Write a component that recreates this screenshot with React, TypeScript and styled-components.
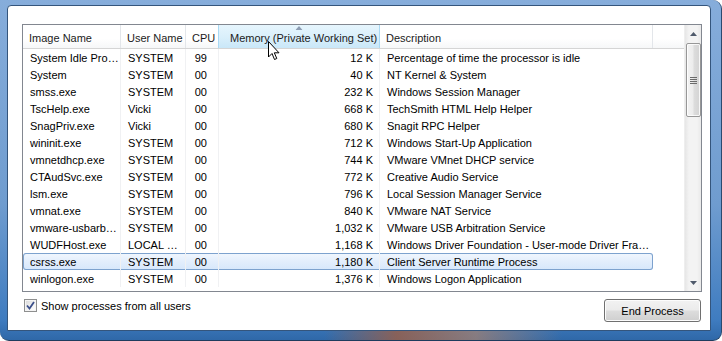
import React from "react";
import styled, { createGlobalStyle } from "styled-components";

const Global = createGlobalStyle`
  html, body { margin: 0; padding: 0; background: #fff; }
  body { font-family: "Liberation Sans", Arial, sans-serif; }
  * { box-sizing: border-box; }
`;

const COLS = [98, 65, 33, 161, 273];

const Window = styled.div`
  position: relative;
  width: 722px;
  height: 341px;
  display: flex;
  flex-direction: column;
  padding: 5px 10px 9px 7px;
  border-radius: 0 9px 9px 9px;
  border-right: 1px solid #2a4a70;
  border-bottom: 1px solid #1f3c5e;
  background:
    linear-gradient(to right, rgba(0,0,0,0) 0%, rgba(0,0,0,0) 45%, rgba(150,95,75,0.85) 55%, rgba(170,130,110,0.7) 66%, rgba(0,0,0,0) 78%) bottom / 100% 9px no-repeat,
    linear-gradient(to bottom, #86addb 0%, #6f9ccf 60%, #3f7cc0 94%, #2f68a8 100%);
  overflow: hidden;
`;

const Panel = styled.div`
  flex: 1;
  display: flex;
  flex-direction: column;
  background: #fff;
  border: 1px solid #34557c;
  border-radius: 4px 4px 0 0;
  padding: 18px 9px 0 14px;
`;

const ListBox = styled.div`
  width: 680px;
  height: 268px;
  border: 1px solid #828790;
  display: flex;
  background: #fff;
  overflow: hidden;
`;

const ListMain = styled.div`
  width: 661px;
  display: flex;
  flex-direction: column;
`;

const Header = styled.div`
  height: 24px;
  display: flex;
  border-bottom: 1px solid #d5d5d5;
  background: linear-gradient(to bottom, #ffffff 0%, #ffffff 60%, #f6f7f8 100%);
`;

const HeadCell = styled.div<{ $w: number; $sorted?: boolean }>`
  position: relative;
  width: ${(p) => p.$w}px;
  flex: none;
  padding-left: ${(p) => (p.$sorted ? 11 : 6)}px;
  padding-top: 2px;
  display: flex;
  align-items: center;
  font-size: 11px;
  color: #1b1b1b;
  white-space: nowrap;
  overflow: hidden;
  border-right: 1px solid #e3e6ea;
  ${(p) =>
    p.$sorted
      ? `background: linear-gradient(to bottom, #e6f5fd 0%, #d9effb 55%, #c9e7f8 100%);
         border-left: 1px solid #a9d9f4; border-right: 1px solid #a9d9f4; margin-left: -1px;`
      : ""}
`;

const SortArrow = styled.svg`
  position: absolute;
  top: 1px;
  left: 50%;
  transform: translateX(-50%);
`;

const Filler = styled.div`
  flex: 1;
`;

const Row = styled.div<{ $selected?: boolean }>`
  height: 17px;
  display: flex;
  position: relative;
  ${(p) =>
    p.$selected
      ? `background: linear-gradient(to bottom, #f1f7fe 0%, #e3eefc 50%, #d6e7fb 100%);
         box-shadow: inset 0 0 0 1px #7da2ce; border-radius: 3px; width: 630px;`
      : ""}
`;

const Cell = styled.div<{ $w: number; $align?: "left" | "right"; $pr?: number; $line?: boolean }>`
  width: ${(p) => p.$w}px;
  flex: none;
  font-size: 11px;
  line-height: 16px;
  padding-top: 1px;
  color: #000;
  white-space: nowrap;
  overflow: hidden;
  padding-left: 7px;
  padding-right: ${(p) => p.$pr ?? 0}px;
  text-align: ${(p) => p.$align ?? "left"};
  border-right: 1px solid ${(p) => (p.$line ? "#f0f1f3" : "transparent")};
`;

const ScrollBar = styled.div`
  width: 17px;
  flex: none;
  display: flex;
  flex-direction: column;
  align-items: center;
  background: linear-gradient(to right, #e6e6e6 0%, #f3f3f3 25%, #f3f3f3 75%, #e9e9e9 100%);
  border-left: 1px solid #eeeeee;
`;

const ArrowBtn = styled.div`
  height: 17px;
  width: 100%;
  display: flex;
  align-items: center;
  justify-content: center;
`;

const Thumb = styled.div`
  margin-top: 1px;
  width: 15px;
  height: 74px;
  border: 1px solid #979797;
  border-radius: 2px;
  background: linear-gradient(to right, #f3f3f3 0%, #ececec 45%, #dcdcdc 55%, #d3d3d3 100%);
  box-shadow: inset 0 0 0 1px rgba(255,255,255,0.8);
  display: flex;
  align-items: center;
  justify-content: center;
`;

const Track = styled.div`
  flex: 1;
`;

const Footer = styled.div`
  display: flex;
  justify-content: space-between;
  align-items: flex-start;
  margin-top: 7px;
  width: 680px;
`;

const CheckLabel = styled.label`
  display: flex;
  align-items: center;
  gap: 4px;
  margin-left: 2px;
  font-size: 11px;
  color: #000;
  height: 13px;
`;

const CheckBox = styled.span`
  width: 13px;
  height: 13px;
  border: 1px solid #8e8f8f;
  background: linear-gradient(135deg, #d6d6d6 0%, #f4f4f4 60%, #ffffff 100%);
  display: flex;
  align-items: center;
  justify-content: center;
  box-shadow: inset 0 0 0 1px #f4f4f4;
`;

const Button = styled.button`
  width: 97px;
  height: 23px;
  margin-right: 1px;
  border: 1px solid #707070;
  border-radius: 3px;
  font-family: inherit;
  font-size: 11px;
  color: #000;
  padding: 1px 0 0;
  background: linear-gradient(to bottom, #f2f2f2 0%, #ebebeb 48%, #dddddd 52%, #cfcfcf 100%);
  box-shadow: inset 0 0 0 1px #fcfcfc;
`;

const Cursor = styled.svg`
  position: absolute;
  left: 268px;
  top: 41px;
`;

type Proc = [string, string, string, string, string];

const DATA: Proc[] = [
  ["System Idle Pro…", "SYSTEM", "99", "12 K", "Percentage of time the processor is idle"],
  ["System", "SYSTEM", "00", "40 K", "NT Kernel & System"],
  ["smss.exe", "SYSTEM", "00", "232 K", "Windows Session Manager"],
  ["TscHelp.exe", "Vicki", "00", "668 K", "TechSmith HTML Help Helper"],
  ["SnagPriv.exe", "Vicki", "00", "680 K", "Snagit RPC Helper"],
  ["wininit.exe", "SYSTEM", "00", "712 K", "Windows Start-Up Application"],
  ["vmnetdhcp.exe", "SYSTEM", "00", "744 K", "VMware VMnet DHCP service"],
  ["CTAudSvc.exe", "SYSTEM", "00", "772 K", "Creative Audio Service"],
  ["lsm.exe", "SYSTEM", "00", "796 K", "Local Session Manager Service"],
  ["vmnat.exe", "SYSTEM", "00", "840 K", "VMware NAT Service"],
  ["vmware-usbarb…", "SYSTEM", "00", "1,032 K", "VMware USB Arbitration Service"],
  ["WUDFHost.exe", "LOCAL …", "00", "1,168 K", "Windows Driver Foundation - User-mode Driver Fra…"],
  ["csrss.exe", "SYSTEM", "00", "1,180 K", "Client Server Runtime Process"],
  ["winlogon.exe", "SYSTEM", "00", "1,376 K", "Windows Logon Application"],
];

export default function App() {
  return (
    <>
      <Global />
      <Window>
        <Panel>
          <ListBox>
            <ListMain>
              <Header>
                <HeadCell $w={COLS[0]}>Image Name</HeadCell>
                <HeadCell $w={COLS[1]}>User Name</HeadCell>
                <HeadCell $w={COLS[2]}>CPU</HeadCell>
                <HeadCell $w={COLS[3] + 1} $sorted>
                  <SortArrow width="7" height="4" viewBox="0 0 7 4">
                    <path d="M3.5 0 L7 4 L0 4 Z" fill="#8d9db3" />
                  </SortArrow>
                  Memory (Private Working Set)
                </HeadCell>
                <HeadCell $w={COLS[4]}>Description</HeadCell>
                <Filler />
              </Header>
              {DATA.map((r, i) => (
                <Row key={i} $selected={r[0] === "csrss.exe"}>
                  <Cell $w={COLS[0]} $line>{r[0]}</Cell>
                  <Cell $w={COLS[1]} $line>{r[1]}</Cell>
                  <Cell $w={COLS[2]} $line $align="right" $pr={11}>{r[2]}</Cell>
                  <Cell $w={COLS[3]} $line $align="right" $pr={6}>{r[3]}</Cell>
                  <Cell $w={COLS[4]}>{r[4]}</Cell>
                </Row>
              ))}
            </ListMain>
            <ScrollBar>
              <ArrowBtn>
                <svg width="7" height="4" viewBox="0 0 7 4">
                  <path d="M3.5 0 L7 4 L0 4 Z" fill="#4f5a6b" />
                </svg>
              </ArrowBtn>
              <Thumb>
                <svg width="7" height="7" viewBox="0 0 7 7">
                  <rect x="0" y="0" width="7" height="1" fill="#6b6b6b" />
                  <rect x="0" y="2" width="7" height="1" fill="#6b6b6b" />
                  <rect x="0" y="4" width="7" height="1" fill="#6b6b6b" />
                  <rect x="0" y="6" width="7" height="1" fill="#6b6b6b" />
                </svg>
              </Thumb>
              <Track />
              <ArrowBtn>
                <svg width="7" height="4" viewBox="0 0 7 4">
                  <path d="M0 0 L7 0 L3.5 4 Z" fill="#4f5a6b" />
                </svg>
              </ArrowBtn>
            </ScrollBar>
          </ListBox>
          <Footer>
            <CheckLabel>
              <CheckBox>
                <svg width="9" height="9" viewBox="0 0 9 9">
                  <path d="M1 4.5 L3.5 7.5 L8 1" fill="none" stroke="#3b4f8a" strokeWidth="1.8" />
                </svg>
              </CheckBox>
              Show processes from all users
            </CheckLabel>
            <Button>End Process</Button>
          </Footer>
        </Panel>
        <Cursor width="12" height="20" viewBox="0 0 12 20">
          <path d="M0.5 0.5 L0.5 16 L4 12.5 L6.5 18.5 L8.8 17.5 L6.3 11.8 L11 11.8 Z" fill="#fff" stroke="#000" strokeWidth="1" strokeLinejoin="miter" />
        </Cursor>
      </Window>
    </>
  );
}
